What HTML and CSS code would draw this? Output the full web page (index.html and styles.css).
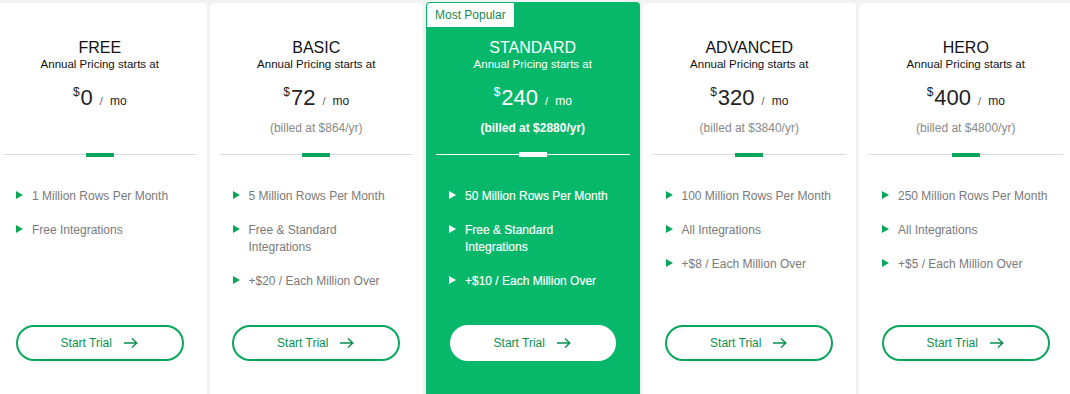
FILE: index.html
```html
<!DOCTYPE html>
<html>
<head>
<meta charset="utf-8">
<title>Pricing</title>
<link rel="stylesheet" href="styles.css">
</head>
<body>
<div class="plans">
  <div class="card">
    <div class="head">
      <div class="name">FREE</div>
      <div class="sub">Annual Pricing starts at</div>
      <div class="price"><sup>$</sup><span class="num">0</span><span class="slash">/</span><span class="mo">mo</span></div>
    </div>
    <div class="divider"><span></span></div>
    <ul class="features">
      <li>1 Million Rows Per Month</li>
      <li>Free Integrations</li>
    </ul>
    <a class="btn">Start Trial <svg width="16" height="12" viewBox="0 0 16 12"><path d="M1 6h13M9 1.5l4.8 4.5L9 10.5" fill="none" stroke="currentColor" stroke-width="1.4"/></svg></a>
  </div>
  <div class="card">
    <div class="head">
      <div class="name">BASIC</div>
      <div class="sub">Annual Pricing starts at</div>
      <div class="price"><sup>$</sup><span class="num">72</span><span class="slash">/</span><span class="mo">mo</span></div>
      <div class="billed">(billed at $864/yr)</div>
    </div>
    <div class="divider"><span></span></div>
    <ul class="features">
      <li>5 Million Rows Per Month</li>
      <li>Free &amp; Standard Integrations</li>
      <li>+$20 / Each Million Over</li>
    </ul>
    <a class="btn">Start Trial <svg width="16" height="12" viewBox="0 0 16 12"><path d="M1 6h13M9 1.5l4.8 4.5L9 10.5" fill="none" stroke="currentColor" stroke-width="1.4"/></svg></a>
  </div>
  <div class="card popular">
    <div class="badge">Most Popular</div>
    <div class="head">
      <div class="name">STANDARD</div>
      <div class="sub">Annual Pricing starts at</div>
      <div class="price"><sup>$</sup><span class="num">240</span><span class="slash">/</span><span class="mo">mo</span></div>
      <div class="billed">(billed at $2880/yr)</div>
    </div>
    <div class="divider"><span></span></div>
    <ul class="features">
      <li>50 Million Rows Per Month</li>
      <li>Free &amp; Standard Integrations</li>
      <li>+$10 / Each Million Over</li>
    </ul>
    <a class="btn">Start Trial <svg width="16" height="12" viewBox="0 0 16 12"><path d="M1 6h13M9 1.5l4.8 4.5L9 10.5" fill="none" stroke="currentColor" stroke-width="1.4"/></svg></a>
  </div>
  <div class="card">
    <div class="head">
      <div class="name">ADVANCED</div>
      <div class="sub">Annual Pricing starts at</div>
      <div class="price"><sup>$</sup><span class="num">320</span><span class="slash">/</span><span class="mo">mo</span></div>
      <div class="billed">(billed at $3840/yr)</div>
    </div>
    <div class="divider"><span></span></div>
    <ul class="features">
      <li>100 Million Rows Per Month</li>
      <li>All Integrations</li>
      <li>+$8 / Each Million Over</li>
    </ul>
    <a class="btn">Start Trial <svg width="16" height="12" viewBox="0 0 16 12"><path d="M1 6h13M9 1.5l4.8 4.5L9 10.5" fill="none" stroke="currentColor" stroke-width="1.4"/></svg></a>
  </div>
  <div class="card">
    <div class="head">
      <div class="name">HERO</div>
      <div class="sub">Annual Pricing starts at</div>
      <div class="price"><sup>$</sup><span class="num">400</span><span class="slash">/</span><span class="mo">mo</span></div>
      <div class="billed">(billed at $4800/yr)</div>
    </div>
    <div class="divider"><span></span></div>
    <ul class="features">
      <li>250 Million Rows Per Month</li>
      <li>All Integrations</li>
      <li>+$5 / Each Million Over</li>
    </ul>
    <a class="btn">Start Trial <svg width="16" height="12" viewBox="0 0 16 12"><path d="M1 6h13M9 1.5l4.8 4.5L9 10.5" fill="none" stroke="currentColor" stroke-width="1.4"/></svg></a>
  </div>
</div>
</body>
</html>
```
FILE: styles.css
```css
html, body {
  margin: 0;
  height: 100%;
  overflow: hidden;
}
body {
  background: #f2f2f2;
  font-family: "Liberation Sans", Arial, sans-serif;
  color: #222;
}
.plans {
  display: grid;
  grid-template-columns: repeat(5, 213.5px);
  gap: 3px;
  margin-left: -7px;
  padding-top: 3px;
  align-items: start;
}
.card {
  position: relative;
  background: #fff;
  border-radius: 4px 4px 0 0;
  height: 420px;
  display: flex;
  flex-direction: column;
}
.card.popular {
  background: #07b86b;
  margin-top: -1px;
  height: 421px;
  color: #fff;
}
.badge {
  position: absolute;
  left: 1px;
  top: 1px;
  background: #fff;
  color: #178a4e;
  font-size: 12px;
  line-height: 24px;
  padding: 0 8px;
  border-radius: 3px 0 0 0;
}
.popular .head { margin-top: 1px; }
.head {
  height: 151px;
  text-align: center;
  padding-top: 36px;
  box-sizing: border-box;
}
.name {
  font-size: 16px;
  line-height: 18px;
  color: #111;
}
.sub {
  font-size: 11.5px;
  line-height: 14px;
  color: #111;
}
.popular .name, .popular .sub { color: #fff; }
.price {
  margin-top: 12px;
  line-height: 30px;
  height: 30px;
  display: flex;
  justify-content: center;
  align-items: baseline;
}
.price sup {
  font-size: 12px;
  position: relative;
  top: 0;
  vertical-align: baseline;
  align-self: flex-start;
  line-height: 18px;
  margin-right: 1px;
}
.num {
  font-size: 22px;
}
.slash {
  font-size: 11px;
  color: #666;
  margin: 0 7px 0 7px;
}
.mo {
  font-size: 12px;
}
.popular .slash { color: #fff; }
.billed {
  margin-top: 7px;
  font-size: 12px;
  line-height: 16px;
  color: #8a8a8a;
}
.popular .billed { color: #fff; font-weight: bold; }
.divider {
  height: 1px;
  background: #dcdcdc;
  margin: 0 10px;
  display: flex;
  justify-content: center;
  align-items: center;
}
.divider span {
  flex: none;
  width: 28px;
  height: 4px;
  background: #0aa65a;
}
.popular .divider { background: #fff; }
.popular .divider span { background: #fff; height: 5px; }
.features {
  list-style: none;
  margin: 0;
  padding: 33px 22px 0 23px;
  height: 133px;
  box-sizing: border-box;
}
.features li {
  position: relative;
  padding-left: 16px;
  font-size: 12px;
  line-height: 17px;
  color: #7a7a7a;
  margin-bottom: 17px;
}
.features li::before {
  content: "";
  position: absolute;
  left: 0;
  top: 3px;
  border-left: 7px solid #0aa65a;
  border-top: 4.5px solid transparent;
  border-bottom: 4.5px solid transparent;
}
.popular .features li { color: #fff; -webkit-text-stroke: 0.15px #fff; }
.popular .features li::before { border-left-color: #fff; }
.btn {
  align-self: center;
  width: 168px;
  height: 36px;
  box-sizing: border-box;
  border: 2px solid #0aa65a;
  border-radius: 18px;
  display: flex;
  align-items: center;
  justify-content: center;
  gap: 11px;
  font-size: 12px;
  color: #0b8f4e;
  margin-top: 37px;
}
.btn svg { display: block; }
.popular .btn {
  background: #fff;
  border-color: #fff;
  width: 166px;
}
```
